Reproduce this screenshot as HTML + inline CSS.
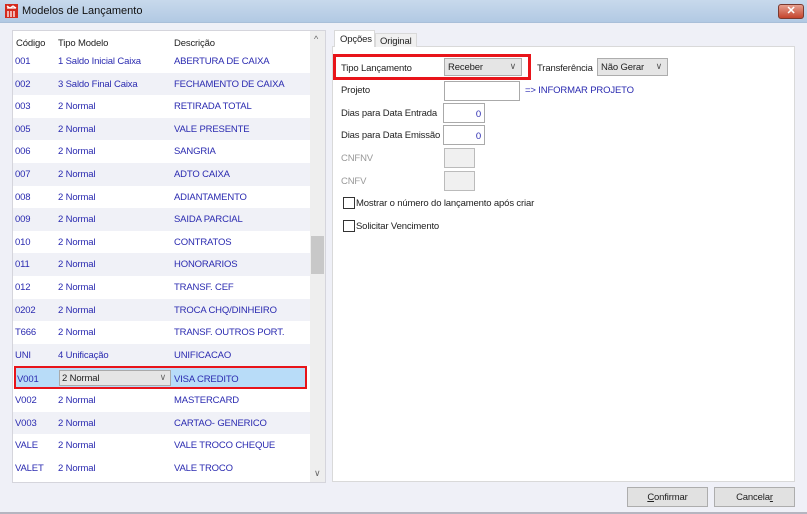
<!DOCTYPE html>
<html><head><meta charset="utf-8">
<style>
*{box-sizing:border-box;margin:0;padding:0}
body{width:807px;height:514px;overflow:hidden;background:#eff0f7;font-family:"Liberation Sans",sans-serif;font-size:9.5px;letter-spacing:-0.15px;color:#222;position:relative}
.abs{position:absolute}
#title{left:0;top:0;width:807px;height:23px;background:linear-gradient(#c8d9ec,#b2c9e3);border-bottom:1px solid #a9bfd9}
#title span{position:absolute;left:22px;top:5px;font-size:11px;letter-spacing:0;color:#111}
#close{left:778px;top:4px;width:26px;height:15px;border-radius:3px;background:linear-gradient(#e6a08f,#c4442d);border:1px solid #7a3a30;color:#fff;font-size:11px;font-weight:bold;text-align:center;line-height:13px}
#grid{left:12px;top:30px;width:314px;height:453px;background:#fff;border:1px solid #d5d5dc}
.row{position:absolute;left:0;width:297px;height:22.6px;color:#2a2ab0}
.row.alt{background:#f0f1f7}
.row div{position:absolute;top:6px;white-space:nowrap}
.c1{left:2px}.c2{left:45px}.c3{left:161px}
.hdr{position:absolute;left:0;top:0;width:297px;height:20px;color:#222}
.hdr div{position:absolute;top:7px}
#sb{left:297px;top:0;width:15px;height:451px;background:#eeeeee}
#tabpanel{left:332px;top:46px;width:463px;height:436px;background:#fff;border:1px solid #d9d9d9}
.lbl{position:absolute;color:#222;white-space:nowrap}
.inp{position:absolute;background:#fff;border:1px solid #aaa;height:20px}
.cmb{position:absolute;background:#e5e5e5;border:1px solid #adadad;height:18px;padding:3px 0 0 3px}
.cmb i{position:absolute;right:5px;top:2px;font-style:normal;color:#555;font-size:9px}
.btn{position:absolute;top:487px;height:20px;background:#e1e1e1;border:1px solid #adadad;text-align:center;padding-top:4px}
.chk{position:absolute;width:12px;height:12px;border:1px solid #333;background:#fff}
</style></head><body>
<div id="title" class="abs">
<svg style="position:absolute;left:5px;top:4px" width="13" height="14" viewBox="0 0 13 14"><rect width="13" height="14" fill="#d42a1e"/><path d="M2 4h9M3 7v6M6 7v6M9 7v6M2 2l3 2 3-2 3 2" stroke="#fff" stroke-width="1.3" fill="none"/></svg>
<span>Modelos de Lançamento</span></div>
<div id="close" class="abs">✕</div>

<div id="grid" class="abs">
<div class="hdr"><div style="left:3px">Código</div><div style="left:45px">Tipo Modelo</div><div style="left:161px">Descrição</div></div>
<div class="row" style="top:19px"><div class="c1">001</div><div class="c2">1 Saldo Inicial Caixa</div><div class="c3">ABERTURA DE CAIXA</div></div>
<div class="row alt" style="top:41.6px"><div class="c1">002</div><div class="c2">3 Saldo Final Caixa</div><div class="c3">FECHAMENTO DE CAIXA</div></div>
<div class="row" style="top:64.2px"><div class="c1">003</div><div class="c2">2 Normal</div><div class="c3">RETIRADA TOTAL</div></div>
<div class="row alt" style="top:86.8px"><div class="c1">005</div><div class="c2">2 Normal</div><div class="c3">VALE PRESENTE</div></div>
<div class="row" style="top:109.4px"><div class="c1">006</div><div class="c2">2 Normal</div><div class="c3">SANGRIA</div></div>
<div class="row alt" style="top:132px"><div class="c1">007</div><div class="c2">2 Normal</div><div class="c3">ADTO CAIXA</div></div>
<div class="row" style="top:154.6px"><div class="c1">008</div><div class="c2">2 Normal</div><div class="c3">ADIANTAMENTO</div></div>
<div class="row alt" style="top:177.2px"><div class="c1">009</div><div class="c2">2 Normal</div><div class="c3">SAIDA PARCIAL</div></div>
<div class="row" style="top:199.8px"><div class="c1">010</div><div class="c2">2 Normal</div><div class="c3">CONTRATOS</div></div>
<div class="row alt" style="top:222.4px"><div class="c1">011</div><div class="c2">2 Normal</div><div class="c3">HONORARIOS</div></div>
<div class="row" style="top:245px"><div class="c1">012</div><div class="c2">2 Normal</div><div class="c3">TRANSF. CEF</div></div>
<div class="row alt" style="top:267.6px"><div class="c1">0202</div><div class="c2">2 Normal</div><div class="c3">TROCA CHQ/DINHEIRO</div></div>
<div class="row" style="top:290.2px"><div class="c1">T666</div><div class="c2">2 Normal</div><div class="c3">TRANSF. OUTROS PORT.</div></div>
<div class="row alt" style="top:312.8px"><div class="c1">UNI</div><div class="c2">4 Unificação</div><div class="c3">UNIFICACAO</div></div>
<div class="row" style="top:335.4px;background:#b8dcf8;border:2px solid #e8141a;left:1px;width:293px"><div class="c1" style="left:1px">V001</div><div class="c3" style="left:158px">VISA CREDITO</div>
<div style="position:absolute;left:43px;top:2px;width:112px;height:16px;background:#e5e5e5;border:1px solid #aaa;color:#222;padding:2px 0 0 2px">2 Normal<span style="position:absolute;right:4px;top:1px;color:#666;font-size:9px">∨</span></div></div>
<div class="row" style="top:358px"><div class="c1">V002</div><div class="c2">2 Normal</div><div class="c3">MASTERCARD</div></div>
<div class="row alt" style="top:380.6px"><div class="c1">V003</div><div class="c2">2 Normal</div><div class="c3">CARTAO- GENERICO</div></div>
<div class="row" style="top:403.2px"><div class="c1">VALE</div><div class="c2">2 Normal</div><div class="c3">VALE TROCO CHEQUE</div></div>
<div class="row" style="top:425.8px"><div class="c1">VALET</div><div class="c2">2 Normal</div><div class="c3">VALE TROCO</div></div>
<div id="sb" class="abs"><div style="position:absolute;left:4px;top:3px;color:#666;font-size:9px">^</div>
<div style="position:absolute;left:1px;top:205px;width:13px;height:38px;background:#c8c8c8"></div>
<div style="position:absolute;left:4px;top:437px;color:#666;font-size:9px">∨</div></div>
</div>

<div id="tabpanel" class="abs"></div>
<div class="abs" style="left:334px;top:30px;width:41px;height:17px;background:#fff;border:1px solid #d9d9d9;border-bottom:none;padding:3px 0 0 5px">Opções</div>
<div class="abs" style="left:375px;top:33px;width:42px;height:14px;background:#f0f0f0;border:1px solid #d9d9d9;border-bottom:none;padding:2px 0 0 4px">Original</div>

<div class="abs" style="left:333px;top:54px;width:198px;height:26px;border:3px solid #e8141a"></div>
<div class="lbl" style="left:341px;top:63px">Tipo Lançamento</div>
<div class="cmb" style="left:444px;top:58px;width:78px">Receber<i>∨</i></div>
<div class="lbl" style="left:537px;top:63px">Transferência</div>
<div class="cmb" style="left:597px;top:58px;width:71px">Não Gerar<i>∨</i></div>
<div class="lbl" style="left:341px;top:85px">Projeto</div>
<div class="inp" style="left:444px;top:81px;width:76px"></div>
<div class="lbl" style="left:525px;top:85px;color:#2a2ab0">=&gt; INFORMAR PROJETO</div>
<div class="lbl" style="left:341px;top:108px">Dias para Data Entrada</div>
<div class="inp" style="left:443px;top:103px;width:42px;color:#2a2ab0;text-align:right;padding:5px 3px 0 0">0</div>
<div class="lbl" style="left:341px;top:130px">Dias para Data Emissão</div>
<div class="inp" style="left:443px;top:125px;width:42px;color:#2a2ab0;text-align:right;padding:5px 3px 0 0">0</div>
<div class="lbl" style="left:341px;top:153px;color:#999">CNFNV</div>
<div class="inp" style="left:444px;top:148px;width:31px;background:#f0f0f0;border-color:#bbb"></div>
<div class="lbl" style="left:341px;top:176px;color:#999">CNFV</div>
<div class="inp" style="left:444px;top:171px;width:31px;background:#f0f0f0;border-color:#bbb"></div>
<div class="chk" style="left:343px;top:197px"></div>
<div class="lbl" style="left:356px;top:198px">Mostrar o número do lançamento após criar</div>
<div class="chk" style="left:343px;top:220px"></div>
<div class="lbl" style="left:356px;top:221px">Solicitar Vencimento</div>

<div class="btn" style="left:627px;width:81px"><u>C</u>onfirmar</div>
<div class="btn" style="left:714px;width:81px">Cancela<u>r</u></div>
<div class="abs" style="left:0;top:512px;width:807px;height:2px;background:#b5b5c0"></div>
</body></html>
